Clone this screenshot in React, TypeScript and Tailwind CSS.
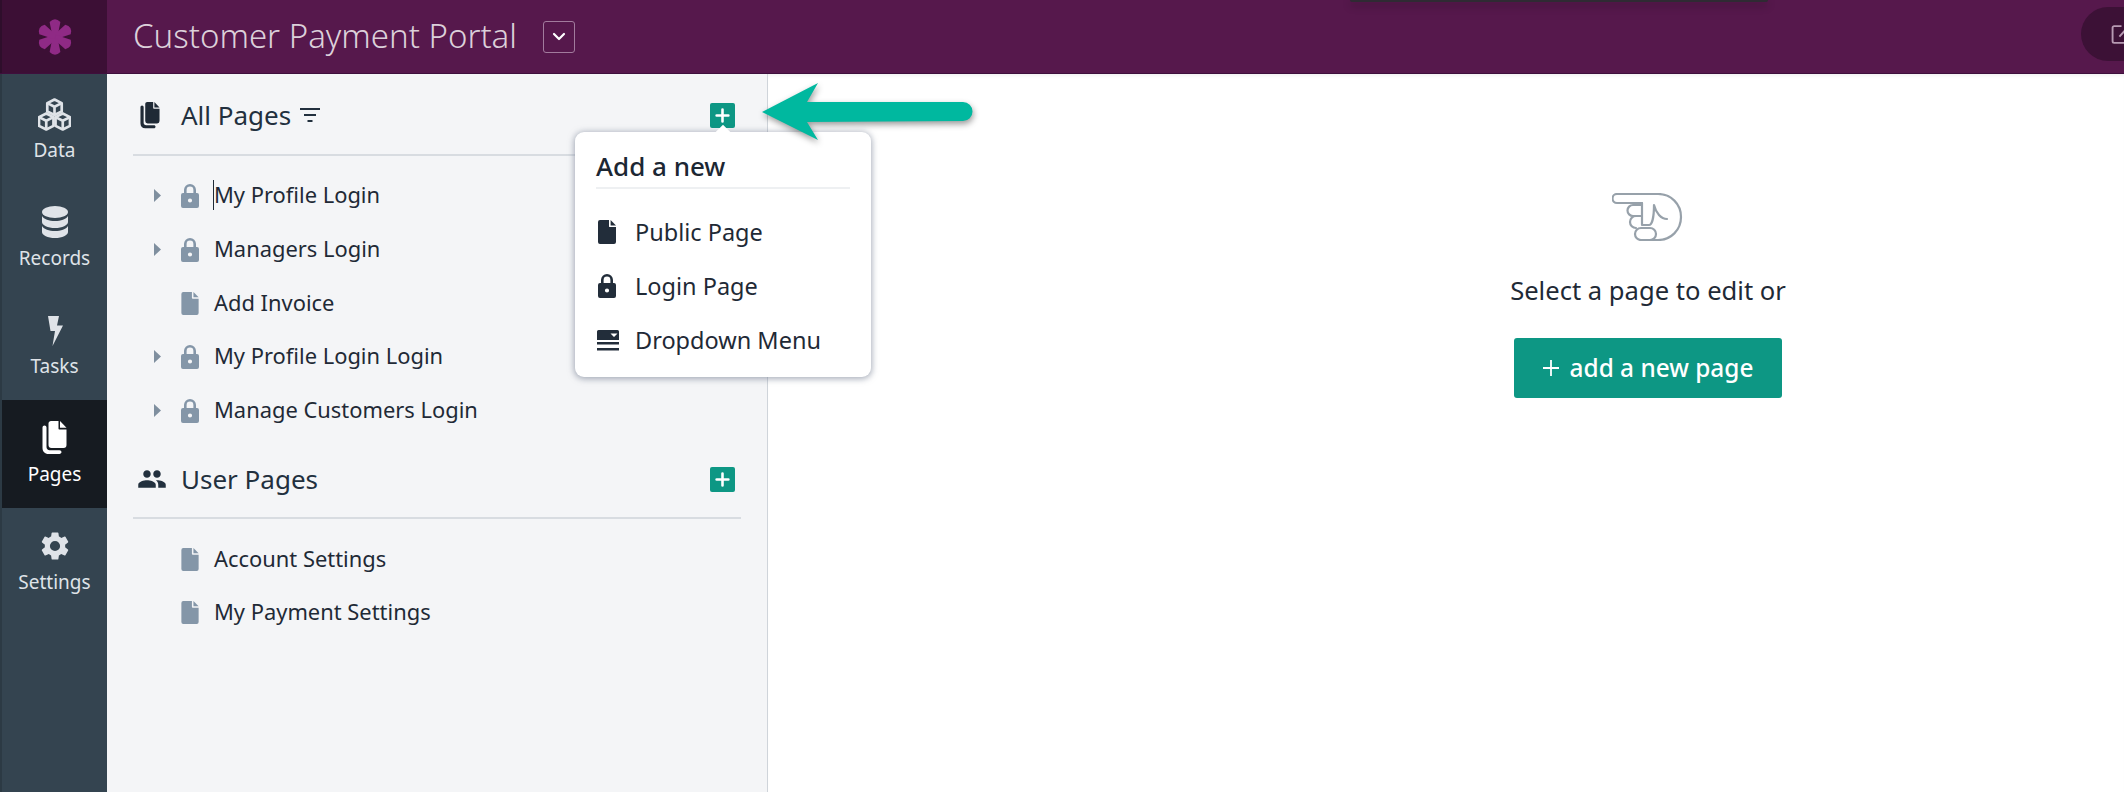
import React from "react";

const font = { fontFamily: '"Noto Sans", sans-serif' };

const FileIcon = ({ className = "" }: { className?: string }) => (
  <svg viewBox="0 0 18 24" className={className} fill="currentColor">
    <path d="M2 0h9v6.2c0 .5.4.9.9.9H18V22a2 2 0 0 1-2 2H2a2 2 0 0 1-2-2V2a2 2 0 0 1 2-2Z" />
    <path d="M12.6 0 18 5.5h-5.4Z" />
  </svg>
);

const LockIcon = ({ className = "" }: { className?: string }) => (
  <svg viewBox="0 0 18 24" className={className}>
    <path fillRule="evenodd" fill="currentColor" d="M3 9V6a6 6 0 0 1 12 0v3h1a2 2 0 0 1 2 2v11a2 2 0 0 1-2 2H2a2 2 0 0 1-2-2V11a2 2 0 0 1 2-2h1Zm2.600 0h6.800V6a3.400 3.400 0 0 0-6.800 0v3ZM9 18.600a2.100 2.100 0 1 0 0-4.200 2.100 2.100 0 0 0 0 4.200Z" />
  </svg>
);

const PagesIcon = ({ className = "" }: { className?: string }) => (
  <svg viewBox="0 0 24 34" className={className} fill="currentColor">
    <path d="M6 2.500C6 1.100 7.100 0 8.500 0H16v7.500c0 .6.4 1 1 1h7V24a3 3 0 0 1-3 3H9a3 3 0 0 1-3-3V2.500Z" />
    <path d="M17.500 0 24 6.800h-6.500Z" />
    <path d="M0 6.500C0 5.400.9 4.500 2 4.500s2 .9 2 2V26c0 2 1.200 3.200 3.200 3.200H17c1.100 0 2 .8 2 1.900S18.100 33 17 33H6c-3.600 0-6-2.400-6-6V6.500Z" />
  </svg>
);

const Cubes = () => (
  <svg viewBox="0 0 32 32" className="h-[33px] w-[33px]" fill="none" stroke="#dfe3e8" strokeWidth="2.600" strokeLinejoin="round">
    <path d="M16 1.500 23 5v8l-7 3.500L9 13V5Z" fill="#344450" />
    <path d="M9 5l7 3.500L23 5M16 8.500v8" />
    <path d="M8 15l7 3.500V27l-7 3.500L1 27v-8.500Z" fill="#344450" />
    <path d="M1 18.500 8 22l7-3.500M8 22v8.500" />
    <path d="M24 15l7 3.500V27l-7 3.500-7-3.500v-8.500Z" fill="#344450" />
    <path d="M17 18.500 24 22l7-3.500M24 22v8.500" />
  </svg>
);

const Database = () => (
  <svg viewBox="0 0 26 32" className="h-[32px] w-[26px]" fill="#dfe3e8">
    <ellipse cx="13" cy="6" rx="13" ry="6" />
    <path d="M0 10c2 3.500 7 5 13 5s11-1.500 13-5v6c0 3.300-5.800 6-13 6S0 19.300 0 16Z" />
    <path d="M0 20c2 3.500 7 5 13 5s11-1.500 13-5v6c0 3.300-5.800 6-13 6S0 29.300 0 26Z" />
  </svg>
);

const Bolt = () => (
  <svg viewBox="0 0 16 31" className="h-[31px] w-[16px]" fill="#dfe3e8">
    <path d="M1 1h11l-2 9.500h6L5.500 31l2.500-15H3.500L1 1Z" />
  </svg>
);

const Gear = () => (
  <svg viewBox="0 0 24 24" className="h-[34px] w-[34px]" fill="#dfe3e8">
    <path fillRule="evenodd" d="M19.140 12.940c.04-.3.060-.61.060-.94s-.02-.64-.07-.94l2.030-1.580a.49.490 0 0 0 .12-.61l-1.920-3.320a.49.490 0 0 0-.59-.22l-2.390.96a7 7 0 0 0-1.620-.94l-.36-2.540a.48.480 0 0 0-.48-.41h-3.840a.48.480 0 0 0-.47.410l-.36 2.540c-.59.24-1.130.57-1.620.94l-2.390-.96a.49.490 0 0 0-.59.220L2.740 8.870a.48.480 0 0 0 .12.610l2.030 1.580c-.05.3-.09.63-.09.94s.02.64.07.94l-2.030 1.580a.49.490 0 0 0-.12.610l1.920 3.320c.12.220.37.290.59.220l2.390-.96c.5.380 1.030.7 1.620.94l.36 2.540c.05.240.24.410.48.410h3.840c.24 0 .44-.17.47-.41l.36-2.540c.59-.24 1.130-.56 1.620-.94l2.390.96c.22.080.47 0 .59-.22l1.920-3.320a.48.480 0 0 0-.12-.61ZM12 15.600a3.600 3.600 0 1 1 0-7.200 3.600 3.600 0 0 1 0 7.200Z" />
  </svg>
);

const PlusBox = () => (
  <div className="flex h-[25px] w-[25px] items-center justify-center rounded-[2px] bg-[#0d9784]">
    <svg viewBox="0 0 14 14" className="h-[15px] w-[15px]" stroke="#fff" strokeWidth="2.400" strokeLinecap="round">
      <path d="M7 1.500v11M1.500 7h11" />
    </svg>
  </div>
);

const Row = ({ label, kind, arrow, caret }: { label: string; kind: "lock" | "file"; arrow?: boolean; caret?: boolean }) => (
  <div className="flex h-[53.700px] items-center pl-[21px]">
    <div className="flex w-[27px] items-center">
      {arrow && (
        <svg viewBox="0 0 7 13" className="h-[13px] w-[7px]" fill="#7f8f9f">
          <path d="M0 0l7 6.500L0 13Z" />
        </svg>
      )}
    </div>
    <div className="flex w-[33px] items-center text-[#8496a8]">
      {kind === "lock" ? <LockIcon className="h-[24px] w-[18px]" /> : <FileIcon className="h-[23px] w-[18px]" />}
    </div>
    <div className="relative mb-[1px] text-[21.900px] leading-[28px] text-[#1f2a36]">
      {caret && <div className="absolute left-[-1px] top-[-1px] h-[30px] w-[1px] bg-[#1f2a36]" />}
      {label}
    </div>
  </div>
);

const NavItem = ({ label, icon, active }: { label: string; icon: React.ReactNode; active?: boolean }) => (
  <div className={`flex h-[108px] flex-col items-center justify-start pt-[21px] ${active ? "bg-[#161b21] text-white" : "text-[#dfe3e8]"}`}>
    <div className="flex h-[34px] items-center justify-center">{icon}</div>
    <div className="mt-[6px] text-[19px] leading-[26px]">{label}</div>
  </div>
);

const MenuItem = ({ label, icon }: { label: string; icon: React.ReactNode }) => (
  <div className="flex h-[54px] items-center pl-[23px]">
    <div className="flex w-[37px] items-center text-[#222d3a]">{icon}</div>
    <div className="text-[23.500px] leading-[28px] text-[#1f2a36]">{label}</div>
  </div>
);

const Arm = ({ angle }: { angle: number }) => (
  <path d="M-2.400 0 L-5.400 -15 Q0 -20.500 5.400 -15 L2.400 0 Z" transform={`rotate(${angle})`} />
);

export default function App() {
  return (
    <div className="relative flex h-[792px] w-[2124px] flex-col overflow-hidden bg-white" style={font}>
      <header className="relative flex h-[74px] shrink-0 items-center border-b border-[#3e0f3d] bg-[#56184c]">
        <div className="flex h-[73px] w-[107px] shrink-0 items-center justify-center border-l-2 border-[#2e0e2b] bg-[#3c0f35]">
          <svg viewBox="-18 -19 36 38" className="h-[38px] w-[36px]" fill="#8f2a85">
            <circle r="4.500" />
            <Arm angle={0} />
            <Arm angle={60} />
            <Arm angle={120} />
            <Arm angle={180} />
            <Arm angle={240} />
            <Arm angle={300} />
          </svg>
        </div>
        <div className="mb-[2px] ml-[26px] text-[33px] font-light leading-[40px] text-[#dcd0da]">Customer Payment Portal</div>
        <div className="ml-[26px] flex h-[32px] w-[32px] items-center justify-center rounded-[3px] border border-[#a27b9d]">
          <svg viewBox="0 0 14 10" className="h-[10px] w-[14px]" fill="none" stroke="#fff" strokeWidth="2.200" strokeLinecap="round" strokeLinejoin="round">
            <path d="M2 2l5 5 5-5" />
          </svg>
        </div>
        <div className="absolute left-[1350px] top-0 h-[2px] w-[418px] rounded-b-[4px] bg-[#2f2a33] shadow-[0_3px_8px_rgba(0,0,0,0.45)]" />
        <div className="absolute left-[2081px] top-[7px] flex h-[54px] w-[80px] items-center rounded-full bg-[#3c1136] pl-[30px]">
          <svg viewBox="0 0 20 20" className="h-[21px] w-[21px] shrink-0" fill="none" stroke="#b79ab3" strokeWidth="1.800">
            <path d="M10 2H3a1.500 1.500 0 0 0-1.500 1.500v13A1.500 1.500 0 0 0 3 18h13a1.500 1.500 0 0 0 1.500-1.500V10M8 12 17 2" />
          </svg>
        </div>
      </header>

      <div className="flex min-h-0 flex-1">
        <nav className="w-[107px] shrink-0 border-l-2 border-[#2c3a44] bg-[#344450] pt-[2px]">
          <NavItem label="Data" icon={<Cubes />} />
          <NavItem label="Records" icon={<Database />} />
          <NavItem label="Tasks" icon={<Bolt />} />
          <NavItem label="Pages" active icon={<PagesIcon className="h-[34px] w-[25px] text-white" />} />
          <NavItem label="Settings" icon={<Gear />} />
        </nav>

        <aside className="w-[661px] shrink-0 border-r border-[#cfd4da] bg-[#f4f5f7] pl-[26px] pr-[26px]">
          <div className="flex h-[82px] items-center border-b-2 border-[#d8dce1] pt-[2px]">
            <div className="flex w-[48px] items-center pl-[7px] text-[#1f2a36]">
              <PagesIcon className="h-[27px] w-[20px]" />
            </div>
            <div className="text-[26px] leading-[34px] text-[#22303e]">All Pages</div>
            <svg viewBox="0 0 20 14" className="ml-[9px] h-[14px] w-[20px]" stroke="#22303e" strokeWidth="1.800">
              <path d="M0 1h20M4 7h12M7.500 13h5" />
            </svg>
            <div className="ml-auto mr-[6px]"><PlusBox /></div>
          </div>
          <div className="pt-[13px]">
            <Row label="My Profile Login" kind="lock" arrow caret />
            <Row label="Managers Login" kind="lock" arrow />
            <Row label="Add Invoice" kind="file" />
            <Row label="My Profile Login Login" kind="lock" arrow />
            <Row label="Manage Customers Login" kind="lock" arrow />
          </div>
          <div className="mt-[4px] flex h-[78px] items-center border-b-2 border-[#d8dce1]">
            <div className="flex w-[48px] items-center pl-[5px] text-[#22303e]">
              <svg viewBox="0 0 24 24" className="ml-[-1px] h-[30px] w-[30px]" fill="currentColor">
                <path d="M16 11c1.660 0 2.990-1.340 2.990-3S17.660 5 16 5s-3 1.340-3 3 1.340 3 3 3Zm-8 0c1.660 0 2.990-1.340 2.990-3S9.660 5 8 5 5 6.340 5 8s1.340 3 3 3Zm0 2c-2.330 0-7 1.170-7 3.500V19h14v-2.500c0-2.330-4.670-3.500-7-3.500Zm8 0c-.29 0-.62.020-.97.050 1.160.84 1.970 1.970 1.970 3.450V19h6v-2.500c0-2.330-4.670-3.500-7-3.500Z" />
              </svg>
            </div>
            <div className="text-[26px] leading-[34px] text-[#22303e]">User Pages</div>
            <div className="ml-auto mr-[6px]"><PlusBox /></div>
          </div>
          <div className="pt-[13px]">
            <Row label="Account Settings" kind="file" />
            <Row label="My Payment Settings" kind="file" />
          </div>
        </aside>

        <main className="flex min-w-0 flex-1 flex-col items-center bg-white pl-[404px] pt-[119px] shadow-[inset_0_4px_4px_-3px_rgba(0,0,0,0.08)]">
          <svg viewBox="0 0 72 48" className="h-[48px] w-[72px]" fill="none" stroke="#97a1aa" strokeWidth="2.200" strokeLinejoin="round" strokeLinecap="round">
            <path d="M30 1H5a4.500 4.500 0 0 0 0 9h25" />
            <path d="M30 1h16c13 0 23 10 23 23S59 47 46 47H40" />
            <path d="M29 12h-8a5.500 5.500 0 0 0 0 11h8" />
            <path d="M24 23a6 6 0 0 0 0 12" />
            <path d="M29 35h9a6 6 0 0 1 0 12h-9a6 6 0 0 1 0-12Z" />
            <path d="M30 10v22h7c3 0 5-8 5-20 2 8 7 14 13 14" />
          </svg>
          <div className="mt-[34px] text-[25.600px] leading-[32px] text-[#1f2a36]">Select a page to edit or</div>
          <div className="mt-[31px] flex h-[60px] w-[268px] items-center justify-center gap-[11px] rounded-[3px] bg-[#0d9784] text-[24.400px] font-medium text-white">
            <svg viewBox="0 0 16 16" className="h-[16px] w-[16px]" stroke="#fff" strokeWidth="1.800">
              <path d="M8 0v16M0 8h16" />
            </svg>
            <span className="leading-[32px]">add a new page</span>
          </div>
        </main>
      </div>

      {/* popover */}
      <div className="absolute left-[575px] top-[132px] h-[245px] w-[296px] rounded-[9px] bg-white shadow-[0_1px_6px_1px_rgba(110,120,140,0.6)]">
        <div className="absolute left-[140px] top-[-4px] h-[16px] w-[16px] rotate-45 bg-white" />
        <div className="relative mx-[21px] mb-[16px] flex h-[57px] items-end border-b-2 border-[#eef0f2] pb-[5px] text-[26px] font-medium leading-[32px] text-[#1c2733]">Add a new</div>
        <div className="relative">
          <MenuItem label="Public Page" icon={<FileIcon className="h-[24px] w-[18px]" />} />
          <MenuItem label="Login Page" icon={<LockIcon className="h-[24px] w-[18px]" />} />
          <MenuItem
            label="Dropdown Menu"
            icon={
              <svg viewBox="0 0 22 21" className="ml-[-1px] h-[21px] w-[22px]" fill="currentColor">
                <path fillRule="evenodd" d="M1.500 0h19A1.500 1.500 0 0 1 22 1.500V10H0V1.500A1.500 1.500 0 0 1 1.500 0Zm12 3.500 3.500 3.500 3.500-3.500Z" />
                <rect x="0" y="12" width="22" height="2.500" />
                <rect x="0" y="18" width="22" height="2.500" />
              </svg>
            }
          />
        </div>
      </div>

      {/* arrow */}
      <svg viewBox="0 0 220 70" className="absolute left-[756px] top-[78px] h-[70px] w-[220px] drop-shadow-[1px_3px_3px_rgba(0,0,0,0.4)]" fill="#00b89f">
        <path d="M6 34 62 5 51 24 H207 a9.500 9.500 0 0 1 0 19 L51 44 62 62 Z" />
      </svg>
    </div>
  );
}
